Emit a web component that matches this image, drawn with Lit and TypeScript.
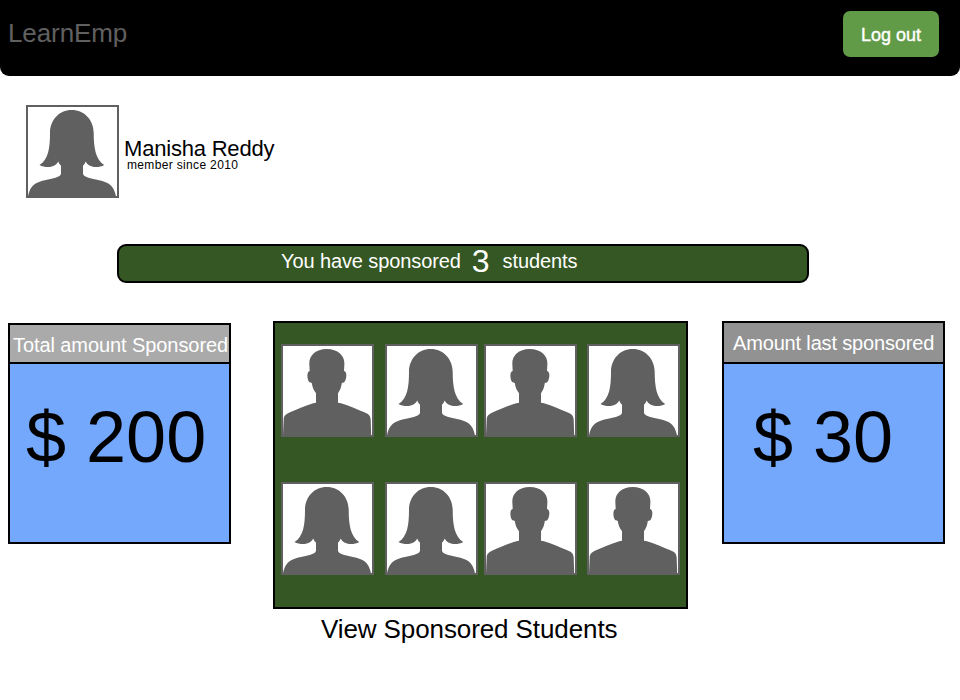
import { LitElement, html, css, svg } from "lit";
import { customElement, property } from "lit/decorators.js";

type Kind = "woman" | "man";

const SHAPES: Record<Kind, string> = {
  woman:
    "M45.7 5 C33 5 24 15 24 28 C24 42 22.5 55 13.5 60 C20 63.4 29 62.8 32.3 56.5 C33 58.5 34 60 35 60.5 V69 C33 74 22 73.5 13 77 C6 79.5 3.5 84 2 91.5 H90 C88.5 84 86 79.5 79 77 C70 73.5 59 74 57 69 V60.5 C58 60 59 58.5 59.5 56.5 C63 62.8 72 63.4 78.2 60 C69.5 55 67.7 42 67.7 28 C67.7 15 58.5 5 45.7 5 Z",
  man:
    "M45.7 5 C34.5 5 28.3 11.5 28.3 19.5 L28.7 27 C25.5 27.5 26 35 28 37.8 C28.8 38.8 29.6 38.9 30.8 39 C31.3 43 32.5 46 35 49.3 V58.7 C28 60 19 64 9 68.3 C4.5 70.3 3 72 2.7 75 L2 91.5 H90.2 L89.7 76 C89.5 71.5 87.5 70 83.3 68.3 C73 64 65 60 57 58.7 V49.3 C59.3 46 60.3 43 60.8 39 C62 38.9 62.8 38.8 63.6 37.8 C65.6 35 66.5 27.5 63 27 L63.4 19.5 C63.4 11.5 57 5 45.7 5 Z",
};

@customElement("user-avatar")
class UserAvatar extends LitElement {
  @property() kind: Kind = "woman";

  static styles = css`
    :host {
      display: block;
      width: 93px;
      height: 93px;
    }
    .picture {
      display: block;
      width: 100%;
      height: 100%;
    }
  `;

  render() {
    return html`<svg class="picture" viewBox="0 0 93 93" aria-hidden="true">
      <rect x="1" y="1" width="91" height="91" fill="#fff" stroke="#606060" stroke-width="2" />
      ${svg`<path d=${SHAPES[this.kind]} fill="#606060" />`}
    </svg>`;
  }
}

@customElement("app-root")
class AppRoot extends LitElement {
  static styles = css`
    * {
      box-sizing: border-box;
    }
    :host {
      display: block;
      height: 700px;
      overflow: hidden;
      background: #fff;
      color: #000;
      font-family: "Liberation Sans", Arial, sans-serif;
      white-space: nowrap;
    }
    .header {
      height: 76px;
      padding: 11px 21px 0 8px;
      display: flex;
      justify-content: space-between;
      align-items: flex-start;
      background: #000;
      border-radius: 0 0 9px 9px;
    }
    .brand {
      font-size: 26px;
      line-height: 44px;
      letter-spacing: -0.1px;
      color: #606060;
    }
    .logout {
      width: 96px;
      height: 46px;
      padding: 1px 0 0;
      border: 0;
      border-radius: 7px;
      background: #629b47;
      color: #fff;
      font: 18px/46px "Liberation Sans", Arial, sans-serif;
      -webkit-text-stroke: 0.4px #fff;
    }
    .profile {
      display: flex;
      gap: 5px;
      margin: 29px 0 0 26px;
    }
    .who {
      padding-top: 33px;
    }
    .name {
      font-size: 22px;
      line-height: 22px;
      letter-spacing: -0.2px;
    }
    .since {
      padding-left: 3px;
      font-size: 12px;
      line-height: 12px;
      letter-spacing: 0.34px;
      margin-top: -1px;
    }
    .banner {
      display: flex;
      width: 692px;
      height: 39px;
      margin: 46px 0 0 117px;
      padding-left: 162px;
      align-items: flex-start;
      border: 2px solid #000;
      border-radius: 9px;
      background: #355723;
      color: #fff;
      font-size: 20px;
      line-height: 30px;
      letter-spacing: -0.1px;
    }
    .count {
      font-size: 32px;
      margin: 0 13px 0 11px;
    }
    .board {
      display: flex;
      align-items: flex-start;
      padding: 38px 0 0 8px;
    }
    .card {
      width: 223px;
      border: 2px solid #000;
      background: #74a8fc;
    }
    .total {
      height: 221px;
      margin-top: 2px;
    }
    .last {
      height: 223px;
    }
    .title {
      border-bottom: 2px solid #000;
      color: #fff;
      font-size: 20px;
    }
    .total .title {
      height: 39px;
      padding-left: 3px;
      line-height: 40px;
      background: #aaa;
      letter-spacing: -0.08px;
    }
    .last .title {
      height: 41px;
      padding-left: 9px;
      line-height: 40px;
      background: #929292;
      letter-spacing: -0.16px;
    }
    .amount {
      font-size: 72px;
      line-height: 80px;
      padding: 33px 0 0 16px;
    }
    .last .amount {
      padding-left: 29px;
    }
    .students {
      width: 415px;
      margin: 0 34px 0 42px;
    }
    .panel {
      display: grid;
      grid-template-columns: 104px 99px 103px 93px;
      grid-template-rows: 93px 93px;
      row-gap: 45px;
      height: 288px;
      padding: 21px 0 0 6px;
      border: 2px solid #000;
      background: #355723;
    }
    .view {
      padding-left: 48px;
      font-size: 26px;
      line-height: 40px;
      letter-spacing: -0.1px;
    }
  `;

  private students: Kind[] = ["man", "woman", "man", "woman", "woman", "woman", "man", "man"];

  render() {
    return html`
      <header class="header">
        <div class="brand">LearnEmp</div>
        <button class="logout">Log out</button>
      </header>
      <section class="profile">
        <user-avatar kind="woman"></user-avatar>
        <div class="who">
          <div class="name">Manisha Reddy</div>
          <div class="since">member since 2010</div>
        </div>
      </section>
      <div class="banner">
        <span>You have sponsored</span><span class="count">3</span><span>students</span>
      </div>
      <main class="board">
        <section class="card total">
          <div class="title">Total amount Sponsored</div>
          <div class="amount">$ 200</div>
        </section>
        <section class="students">
          <div class="panel">
            ${this.students.map((kind) => html`<user-avatar .kind=${kind}></user-avatar>`)}
          </div>
          <div class="view">View Sponsored Students</div>
        </section>
        <section class="card last">
          <div class="title">Amount last sponsored</div>
          <div class="amount">$ 30</div>
        </section>
      </main>
    `;
  }
}
